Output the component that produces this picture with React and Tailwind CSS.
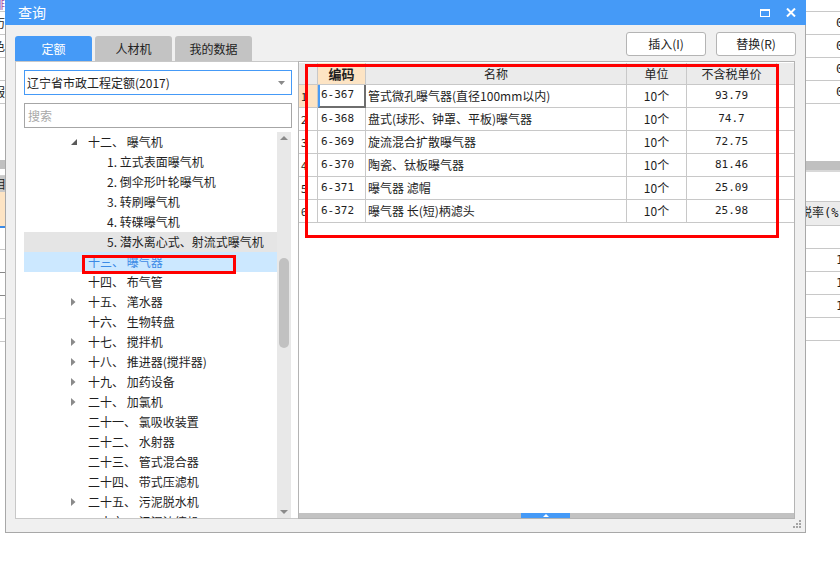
import React from "react";

const treeItems = [
  { label: "十二、 曝气机", level: 1, arrow: "open" },
  { label: "1. 立式表面曝气机", level: 2 },
  { label: "2. 倒伞形叶轮曝气机", level: 2 },
  { label: "3. 转刷曝气机", level: 2 },
  { label: "4. 转碟曝气机", level: 2 },
  { label: "5. 潜水离心式、射流式曝气机", level: 2, hover: true },
  { label: "十三、 曝气器", level: 1, selected: true },
  { label: "十四、 布气管", level: 1 },
  { label: "十五、 滗水器", level: 1, arrow: "closed" },
  { label: "十六、 生物转盘", level: 1 },
  { label: "十七、 搅拌机", level: 1, arrow: "closed" },
  { label: "十八、 推进器(搅拌器)", level: 1, arrow: "closed" },
  { label: "十九、 加药设备", level: 1, arrow: "closed" },
  { label: "二十、 加氯机", level: 1, arrow: "closed" },
  { label: "二十一、 氯吸收装置", level: 1 },
  { label: "二十二、 水射器", level: 1 },
  { label: "二十三、 管式混合器", level: 1 },
  { label: "二十四、 带式压滤机", level: 1 },
  { label: "二十五、 污泥脱水机", level: 1, arrow: "closed" },
  { label: "二十六、 污泥浓缩机", level: 1 },
];

const rows = [
  ["6-367", "管式微孔曝气器(直径100mm以内)", "10个", "93.79"],
  ["6-368", "盘式(球形、钟罩、平板)曝气器", "10个", "74.7"],
  ["6-369", "旋流混合扩散曝气器", "10个", "72.75"],
  ["6-370", "陶瓷、钛板曝气器", "10个", "81.46"],
  ["6-371", "曝气器 滤帽", "10个", "25.09"],
  ["6-372", "曝气器 长(短)柄滤头", "10个", "25.98"],
];

const OpenArrow = () => (
  <svg width="6" height="6" viewBox="0 0 6 6">
    <polygon points="6,0 6,6 0,6" fill="#5a5a5a" />
  </svg>
);

const ClosedArrow = () => (
  <svg width="5" height="8" viewBox="0 0 5 8">
    <polygon points="0,0 4.5,4 0,8" fill="#8a8a8a" />
  </svg>
);

const TreeRow = ({ item }) => {
  let bg = "";
  if (item.hover) bg = "bg-[#e5e5e5]";
  if (item.selected) bg = "bg-[#cce8ff]";
  return (
    <div
      className={`h-[20px] flex items-center whitespace-nowrap text-[12px] ${bg} ${
        item.selected ? "text-[#3b8ae6]" : "text-[#1e1e1e]"
      } ${item.level === 1 ? "pl-[47px]" : "pl-[83px]"}`}
    >
      {item.level === 1 && (
        <span className="w-[17px] flex items-center">
          {item.arrow === "open" && <OpenArrow />}
          {item.arrow === "closed" && <ClosedArrow />}
        </span>
      )}
      <span>{item.label}</span>
    </div>
  );
};

const SideLeft = () => (
  <div className="w-[5px] h-[564px] overflow-hidden flex flex-col text-[12px] text-[#222] bg-white">
    <div className="h-[12px] border-b border-[#c8c8c8] -ml-[7px] leading-[8px] text-[#9b4aa8]">排</div>
    {["历", "色", "1", "服"].map((t, i) => (
      <div key={i} className="h-[23px] border-b border-[#c8c8c8] -ml-[7px] leading-[22px] whitespace-nowrap">
        {t}
      </div>
    ))}
    <div className="h-[56px]" />
    <div className="h-[9px] bg-[#c0c0c0]" />
    <div className="h-[7px] bg-white border-b border-[#d0d0d0]" />
    <div className="h-[16px] bg-[#c8c8c8] -ml-[7px] leading-[16px]">相</div>
    <div className="h-[34px] bg-[#fde4c4]" />
    <div className="h-[2px] bg-[#3b8ae6]" />
    <div className="h-[22px] border-b border-[#c8c8c8]" />
    <div className="h-[23px] border-b border-[#888]" />
    <div className="h-[23px] border-b border-[#888] -ml-[7px] leading-[22px]">2</div>
    <div className="h-[23px] border-b border-[#c8c8c8]" />
    <div className="h-[23px] border-b border-[#c8c8c8]" />
  </div>
);

const SideRight = () => (
  <div className="w-[34px] h-[564px] overflow-hidden flex flex-col text-[12px] text-[#222] bg-white font-['DejaVu_Sans_Mono','Noto_Sans_CJK_SC',monospace]">
    <div className="h-[12px] border-b border-[#c8c8c8]" />
    {[0, 1, 2, 3].map((i) => (
      <div key={i} className="h-[23px] border-b border-[#c8c8c8] pl-[30px] leading-[22px] whitespace-nowrap">
        0.00
      </div>
    ))}
    <div className="h-[57px]" />
    <div className="h-[9px] bg-[#c0c0c0]" />
    <div className="h-[2px] bg-[#d8d8d8]" />
    <div className="h-[30px] border-b border-[#c8c8c8]" />
    <div className="h-[24px] bg-[#ececec] border-b border-[#c8c8c8] -ml-[6px] leading-[23px] whitespace-nowrap">
      税率(%)
    </div>
    <div className="h-[23px] border-b border-[#c8c8c8]" />
    {[0, 1, 2].map((i) => (
      <div key={i} className="h-[23px] border-b border-[#c8c8c8] pl-[30px] leading-[22px] whitespace-nowrap">
        13
      </div>
    ))}
    <div className="h-[23px] border-b border-[#c8c8c8]" />
  </div>
);

const Table = () => (
  <div className="flex flex-col text-[12px] text-[#1e1e1e]">
    {/* header */}
    <div className="flex h-[22px] bg-[#ebebeb] border-b border-[#c8c8c8]">
      <div className="w-[19px] border-r border-[#c8c8c8]" />
      <div className="w-[48px] border-r border-[#c8c8c8] bg-[#fde4c4] flex items-center justify-center font-bold text-[13px]">
        编码
      </div>
      <div className="w-[261px] border-r border-[#c8c8c8] flex items-center justify-center">名称</div>
      <div className="w-[60px] border-r border-[#c8c8c8] flex items-center justify-center">单位</div>
      <div className="w-[90px] border-r border-[#c8c8c8] flex items-center justify-center">不含税单价</div>
    </div>
    {rows.map((r, i) => (
      <div key={i} className="flex h-[23px] border-b border-[#c8c8c8]">
        <div
          className={`w-[19px] border-r border-[#c8c8c8] pl-[2px] flex items-center text-[11px] ${
            i === 0 ? "bg-[#fde4c4]" : "bg-white"
          }`}
        >
          {i + 1}
        </div>
        <div
          className={`w-[48px] flex items-center font-['DejaVu_Sans_Mono',monospace] text-[11px] ${
            i === 0
              ? "border-l-2 border-l-[#4a9cf5] border-r-2 border-r-[#6e6e6e] border-b-2 border-b-[#6e6e6e] pl-[1px] -mb-px"
              : "border-r border-[#c8c8c8] pl-[3px]"
          }`}
        >
          {r[0]}
        </div>
        <div className="w-[261px] border-r border-[#c8c8c8] pl-[2px] flex items-center whitespace-nowrap">
          {r[1]}
        </div>
        <div className="w-[60px] border-r border-[#c8c8c8] flex items-center justify-center">{r[2]}</div>
        <div className="w-[90px] border-r border-[#c8c8c8] flex items-center justify-center font-['DejaVu_Sans_Mono',monospace] text-[11px]">
          {r[3]}
        </div>
      </div>
    ))}
  </div>
);

const App = () => {
  return (
    <div className="relative w-[840px] h-[564px] bg-white flex items-start overflow-hidden font-['Noto_Sans_CJK_SC',sans-serif]">
      <SideLeft />

      {/* dialog */}
      <div className="w-[801px] h-[533px] flex flex-col">
        <div className="h-[25px] bg-[#459af7] flex items-center justify-between pl-[13px] pr-[10px]">
          <span className="text-white text-[14px]">查询</span>
          <div className="flex items-center gap-[16px]">
            <svg width="10" height="8" viewBox="0 0 10 8">
              <rect x="0.5" y="1" width="9" height="6.5" fill="none" stroke="#fff" strokeWidth="1" />
              <rect x="0" y="0" width="10" height="2" fill="#fff" />
            </svg>
            <svg width="10" height="9" viewBox="0 0 10 9">
              <path d="M1 0.5 L9 8.5 M9 0.5 L1 8.5" stroke="#fff" strokeWidth="2" />
            </svg>
          </div>
        </div>

        <div className="flex-1 bg-[#f0f0f0] border-x border-b border-[#a8a8a8] px-[9px] pt-[7px] flex flex-col">
          {/* tabs + buttons */}
          <div className="h-[29px] flex justify-between">
            <div className="flex gap-[3px] self-end text-[12px]">
              <div className="w-[77px] h-[25px] rounded-t-[3px] bg-[#459af7] text-white flex items-center justify-center">
                定额
              </div>
              <div className="w-[77px] h-[25px] rounded-t-[3px] bg-[#c3c3c3] text-[#222] flex items-center justify-center">
                人材机
              </div>
              <div className="w-[77px] h-[25px] rounded-t-[3px] bg-[#c3c3c3] text-[#222] flex items-center justify-center">
                我的数据
              </div>
            </div>
            <div className="flex gap-[10px] self-start text-[12px] text-[#222]">
              <div className="w-[80px] h-[24px] bg-white border border-[#b4b4b4] rounded-[3px] flex items-center justify-center">
                插入(I)
              </div>
              <div className="w-[80px] h-[24px] bg-white border border-[#b4b4b4] rounded-[3px] flex items-center justify-center">
                替换(R)
              </div>
            </div>
          </div>

          {/* panels */}
          <div className="h-[458px] flex">
            {/* left tree panel */}
            <div className="w-[283px] bg-white border-l border-t border-b border-[#c8c8c8] pl-[8px] pr-[6px] pt-[8px] flex flex-col">
              <div className="h-[25px] border border-[#459af7] flex items-center justify-between pl-[2px] pr-[6px] text-[12px] text-[#222]">
                <span>辽宁省市政工程定额(2017)</span>
                <svg width="7" height="4" viewBox="0 0 7 4">
                  <polygon points="0,0 7,0 3.5,4" fill="#8a8a8a" />
                </svg>
              </div>
              <div className="h-[25px] mt-[8px] border border-[#a6a6a6] flex items-center pl-[3px] text-[12px] text-[#a8a8a8]">
                搜索
              </div>
              <div className="mt-[4px] flex-1 flex overflow-hidden">
                <div className="w-[253px] overflow-hidden">
                  {treeItems.map((item, i) => (
                    <TreeRow key={i} item={item} />
                  ))}
                </div>
                <div className="w-[14px] bg-[#e8e8e8] flex flex-col items-center">
                  <div className="h-[12px] flex items-center">
                    <svg width="8" height="4" viewBox="0 0 8 4">
                      <polygon points="0,4 8,4 4,0" fill="#8a8a8a" />
                    </svg>
                  </div>
                  <div className="mt-[114px] w-[10px] h-[90px] rounded-[5px] bg-[#c1c1c1]" />
                  <div className="flex-1" />
                  <div className="h-[12px] flex items-center">
                    <svg width="8" height="4" viewBox="0 0 8 4">
                      <polygon points="0,0 8,0 4,4" fill="#8a8a8a" />
                    </svg>
                  </div>
                </div>
              </div>
            </div>

            {/* right table panel */}
            <div className="w-[497px] bg-white border border-[#b4b4b4] flex flex-col pt-[1px]">
              <Table />
              <div className="flex-1" />
              <div className="h-[5px] bg-[#c2c2c2] flex">
                <div className="ml-[222px] w-[49px] h-[5px] bg-[#459af7] flex items-center justify-center">
                  <svg width="6" height="3" viewBox="0 0 6 3">
                    <polygon points="0,3 6,3 3,0" fill="#fff" />
                  </svg>
                </div>
              </div>
            </div>
          </div>

          {/* resize grip */}
          <div className="h-[13px] flex justify-end items-start pt-[1px] -mr-[6px]">
            <svg width="9" height="9" viewBox="0 0 9 9">
              <rect x="6" y="0" width="2" height="2" fill="#a4a4a4" />
              <rect x="3" y="3" width="2" height="2" fill="#a4a4a4" />
              <rect x="6" y="3" width="2" height="2" fill="#a4a4a4" />
              <rect x="0" y="6" width="2" height="2" fill="#a4a4a4" />
              <rect x="3" y="6" width="2" height="2" fill="#a4a4a4" />
              <rect x="6" y="6" width="2" height="2" fill="#a4a4a4" />
            </svg>
          </div>
        </div>
      </div>

      <SideRight />

      {/* red annotation boxes */}
      <div className="absolute left-[305px] top-[64px] w-[474px] h-[174px] border-[3px] border-[#ff0000] pointer-events-none" />
      <div className="absolute left-[82px] top-[255px] w-[154px] h-[19px] border-[3px] border-[#ff0000] pointer-events-none" />
    </div>
  );
};

export default App;
